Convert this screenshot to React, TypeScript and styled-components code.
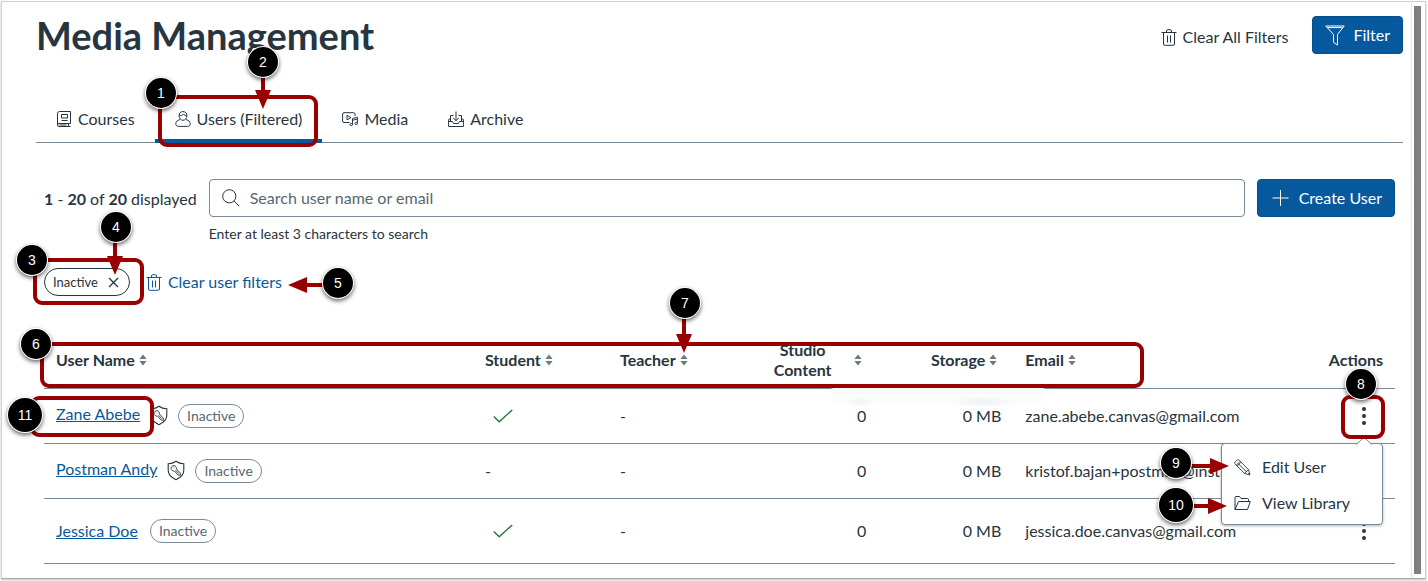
import React from "react";
import styled, { createGlobalStyle } from "styled-components";

const ink = "#273540";
const line = "#7b8a94";
const blue = "#07599e";
const red = "#990000";

const GlobalStyle = createGlobalStyle`
  *, *::before, *::after { box-sizing: border-box; }
  body {
    margin: 0;
    background: #fff;
    color: ${ink};
    font: 16px/20px Lato, "Liberation Sans", sans-serif;
  }
  button, input { font: inherit; color: inherit; margin: 0; }
  button { cursor: pointer; }
`;

/* ---------- page frame ---------- */

const Window = styled.div`
  position: relative;
  display: flex;
  margin: 1px 2px 2px 1px;
  border: 1px solid #d0d0d0;
  border-bottom-color: #a8a8a8;
  box-shadow: 0 1px 2px rgba(0, 0, 0, 0.25);
`;

const Page = styled.main`
  flex: 1;
  min-width: 0;
  padding: 14px 8px 14px 34px;
`;

const ScrollTrack = styled.div`
  display: flex;
  padding: 4px 4px 4px 2px;
  border-left: 1px solid #e4e4e4;
`;

const ScrollThumb = styled.div`
  width: 7px;
  background: #7e7e7e;
`;

/* ---------- header ---------- */

const Header = styled.header`
  display: flex;
  align-items: flex-start;
  justify-content: space-between;
`;

const Title = styled.h1`
  margin: 0;
  font-size: 38px;
  line-height: 38px;
  font-weight: 700;
`;

const HeaderActions = styled.div`
  display: flex;
  align-items: center;
  gap: 24px;
`;

const TextButton = styled.button<{ $link?: boolean }>`
  display: inline-flex;
  align-items: center;
  gap: 6px;
  padding: 0;
  border: 0;
  background: none;
  color: ${(p) => (p.$link ? blue : ink)};
`;

const ClearAllButton = styled(TextButton)`
  padding-top: 4px;
`;

const PrimaryButton = styled.button`
  display: inline-flex;
  align-items: center;
  flex: none;
  gap: 8px;
  height: 38px;
  padding: 0 12px;
  border: 1px solid #05508f;
  border-radius: 4px;
  background: ${blue};
  color: #fff;
`;

/* ---------- tabs ---------- */

const Tabs = styled.div`
  display: flex;
  margin-top: 43px;
  border-bottom: 1px solid ${line};
`;

const Tab = styled.button<{ $active?: boolean }>`
  display: flex;
  align-items: center;
  gap: 6px;
  height: 46px;
  padding: 1px 20px 0;
  border: 0;
  border-bottom: 4px solid ${(p) => (p.$active ? blue : "transparent")};
  margin-bottom: -1px;
  background: none;
`;

/* ---------- search ---------- */

const Panel = styled.section`
  padding: 36px 8px 0;
`;

const SearchRow = styled.div`
  display: flex;
  align-items: flex-start;
  gap: 12px;
`;

const Count = styled.div`
  flex: none;
  line-height: 40px;
`;

const SearchField = styled.div`
  flex: 1;
  min-width: 0;
`;

const SearchBox = styled.label`
  display: flex;
  align-items: center;
  gap: 10px;
  height: 38px;
  padding: 0 12px;
  border: 1px solid ${line};
  border-radius: 4px;
`;

const SearchInput = styled.input`
  flex: 1;
  min-width: 0;
  padding: 0;
  border: 0;
  outline: 0;
  background: none;
  &::placeholder { color: #576773; opacity: 1; }
`;

const Hint = styled.div`
  margin-top: 7px;
  font-size: 14px;
`;

const FilterRow = styled.div`
  display: flex;
  align-items: center;
  gap: 16px;
  margin-top: 24px;
`;

const FilterTag = styled.button`
  display: inline-flex;
  align-items: center;
  gap: 10px;
  height: 28px;
  padding: 0 10px 0 8px;
  border: 1px solid ${ink};
  border-radius: 14px;
  background: #fff;
  font-size: 13px;
`;

/* ---------- table ---------- */

const Table = styled.table`
  width: 100%;
  margin-top: 35px;
  border-collapse: collapse;
  table-layout: fixed;
`;

const NameCol = styled.col` width: 31.75%; `;
const StatCol = styled.col` width: 10%; `;
const ActionCol = styled.col` width: 8%; `;

type Align = "left" | "right" | "center";

const HeadCell = styled.th<{ $align?: Align }>`
  height: 57px;
  padding: 2px 12px 0;
  border-bottom: 1px solid ${line};
  text-align: ${(p) => p.$align ?? "left"};
  font-weight: 700;
`;

const SortButton = styled.button<{ $wide?: boolean }>`
  display: ${(p) => (p.$wide ? "flex" : "inline-flex")};
  width: ${(p) => (p.$wide ? "100%" : "auto")};
  align-items: center;
  padding: 0;
  border: 0;
  background: none;
  font-weight: 700;
  span { flex: 1; }
`;

const Row = styled.tr<{ $tall?: boolean }>`
  height: ${(p) => (p.$tall ? 65 : 55)}px;
`;

const Cell = styled.td<{ $align?: Align }>`
  padding: 0 12px;
  border-bottom: 1px solid ${line};
  text-align: ${(p) => p.$align ?? "left"};
  white-space: nowrap;
  vertical-align: middle;
`;

const NameLine = styled.div<{ $admin: boolean }>`
  display: flex;
  align-items: ${(p) => (p.$admin ? "flex-start" : "center")};
  gap: ${(p) => (p.$admin ? 10 : 12)}px;
`;

const NameLink = styled.a`
  color: ${blue};
  text-decoration: underline;
`;

const StatusPill = styled.span`
  height: 24px;
  padding: 0 8px;
  border: 1px solid ${line};
  border-radius: 12px;
  color: #576773;
  font-size: 14px;
  line-height: 22px;
`;

const CheckMark = styled.span`
  display: flex;
  padding-left: 8px;
`;

const MoreButton = styled.button`
  display: inline-flex;
  padding: 0;
  margin-right: 11px;
  border: 0;
  background: none;
  vertical-align: middle;
`;

/* ---------- popup menu ---------- */

const Menu = styled.div`
  position: absolute;
  z-index: 2;
  top: 441px;
  right: 42px;
  width: 162px;
  padding: 5px 0 3px;
  border: 1px solid ${line};
  border-radius: 4px;
  background: #fff;
  box-shadow: 0 1px 3px rgba(0, 0, 0, 0.3);
`;

const MenuPointer = styled.svg`
  position: absolute;
  top: -7px;
  right: 10px;
`;

const MenuItem = styled.button`
  display: flex;
  align-items: center;
  gap: 11px;
  width: 100%;
  height: 36px;
  padding: 0 12px;
  border: 0;
  background: none;
`;

/* ---------- callouts ---------- */

const Callouts = styled.div`
  position: absolute;
  z-index: 3;
  inset: 0;
  pointer-events: none;
`;

type Spot = { $top: number; $left?: string; $right?: string };

const place = (p: Spot) => `
  position: absolute;
  top: ${p.$top}px;
  ${p.$left ? `left: ${p.$left};` : ""}
  ${p.$right ? `right: ${p.$right};` : ""}
`;

const Outline = styled.div<Spot & { $width?: number; $height: number }>`
  ${place}
  ${(p) => (p.$width ? `width: ${p.$width}px;` : "")}
  height: ${(p) => p.$height}px;
  border: 4px solid ${red};
  border-radius: 9px;
`;

const Badge = styled.div<Spot & { $large?: boolean }>`
  ${place}
  width: ${(p) => (p.$large ? 34 : 30)}px;
  height: ${(p) => (p.$large ? 34 : 30)}px;
  border-radius: 50%;
  background: #000;
  box-shadow: 0 0 0 1px #fff, 0 2px 4px 1px rgba(0, 0, 0, 0.6);
  color: #fff;
  font: 14px/30px "Liberation Sans", sans-serif;
  line-height: ${(p) => (p.$large ? 34 : 30)}px;
  text-align: center;
`;

const ArrowSvg = styled.svg<Spot>`
  ${place}
`;

const StickyShade = styled.div<Spot>`
  ${place}
  width: 212px;
  height: 20px;
  background:
    radial-gradient(ellipse 16px 5px at 28px 16px, #f1f2f3, transparent),
    radial-gradient(ellipse 34px 6px at 150px 16px, #eff0f2, transparent),
    linear-gradient(#f9fafa, #fefefe);
  filter: blur(1px);
`;

const DownArrow = (p: Spot & { height: number }) => (
  <ArrowSvg $top={p.$top} $left={p.$left} width="16" height={p.height} aria-hidden>
    <path d={`M6 0h4v${p.height - 18}H6z`} fill={red} />
    <path d={`M0 ${p.height - 19}h16l-8 19z`} fill={red} />
  </ArrowSvg>
);

const SideArrow = (p: Spot & { width: number; flip?: boolean }) => (
  <ArrowSvg $top={p.$top} $left={p.$left} $right={p.$right} width={p.width} height="16" aria-hidden>
    <g transform={p.flip ? `translate(${p.width} 0) scale(-1 1)` : undefined}>
      <path d={`M0 6h${p.width - 18}v4H0z`} fill={red} />
      <path d={`M${p.width - 19} 0v16l19-8z`} fill={red} />
    </g>
  </ArrowSvg>
);

/* ---------- icons ---------- */

const IconSvg = styled.svg`
  flex: none;
`;

const Icon = (p: { w?: number; h?: number; box?: string; sw?: number; children: React.ReactNode }) => (
  <IconSvg
    width={p.w ?? 16}
    height={p.h ?? 16}
    viewBox={p.box ?? "0 0 16 16"}
    fill="none"
    stroke="currentColor"
    strokeWidth={p.sw ?? 1}
    aria-hidden
  >
    {p.children}
  </IconSvg>
);

const TrashIcon = () => (
  <Icon h={17} box="0 0 16 17">
    <path d="M0.5 3.5h15M5.5 3.5v-1.500a1.300 1.300 0 0 1 1.300-1.300h2.400a1.300 1.300 0 0 1 1.300 1.300v1.500M2.500 3.500v11.500a1.300 1.300 0 0 0 1.300 1.300h8.400a1.300 1.300 0 0 0 1.300-1.300V3.500M6.500 6.500v7M9.500 6.500v7" />
  </Icon>
);

const FunnelIcon = () => (
  <Icon w={20} h={21} box="0 0 20 21">
    <path d="M0.800 1h18.400l-6.700 8.500v10.500l-4-2.700V9.500zM2.500 2.600h15" />
  </Icon>
);

const BookIcon = () => (
  <Icon>
    <path d="M14.500 12.500H3a1.500 1.500 0 0 0 0 3h11.500M14.500 12.500V0.500H3.500a2 2 0 0 0-2 2V14M5.500 3.500h6v3.500H5.500zM5.500 9.500h6M12.500 12.500v3M3.500 14h7" />
  </Icon>
);

const UserIcon = () => (
  <Icon>
    <path d="M8 0.600c2.500 0 3.900 1.600 3.900 4.100 0 2.300-1.500 4.600-3.900 4.600S4.100 7 4.100 4.700C4.100 2.200 5.500 0.600 8 0.600zM4.200 4.600c2 0.200 3.500-0.400 4.300-1.600 0.700 1 1.800 1.600 3.300 1.600M5 8.600C2.300 9.300 0.800 10.600 0.800 12.800c0 1.500 0.900 2.600 2.600 2.600h9.200c1.700 0 2.600-1.100 2.600-2.600 0-2.200-1.500-3.500-4.200-4.200" />
  </Icon>
);

const MediaIcon = () => (
  <Icon>
    <path d="M7.500 11.500H2a1.400 1.400 0 0 1-1.400-1.400V3.100A1.400 1.400 0 0 1 2 1.700h9.600A1.400 1.400 0 0 1 13 3.100V5M5 4.300v4.500l4-2.200zM10.500 13.300V7.500l4.900-1.300v6M10.500 9.300l4.900-1.300" />
    <ellipse cx="9.300" cy="13.500" rx="1.300" ry="1.100" />
    <ellipse cx="14.200" cy="12.500" rx="1.300" ry="1.100" />
  </Icon>
);

const ArchiveIcon = () => (
  <Icon>
    <path d="M8 0.500v9M5 6.700l3 3 3-3M5.500 4.500H2.500v6M10.500 4.500h3v6M0.600 8.500v7h14.800v-7M0.600 10.500h3.700l1.400 2h4.600l1.400-2h3.700M0.600 8.500l1.900-1M15.400 8.500l-1.900-1" />
  </Icon>
);

const SearchIcon = () => (
  <Icon w={18} h={18} box="0 0 18 18">
    <circle cx="7.300" cy="7.300" r="6.600" />
    <path d="M12 12l5.300 5.300" />
  </Icon>
);

const PlusIcon = () => (
  <Icon w={21} h={18} box="-2 0 21 18">
    <path d="M8.500 1v16M0.500 9h16" />
  </Icon>
);

const CloseIcon = () => (
  <Icon w={11} h={11} box="0 0 11 11" sw={1.3}>
    <path d="M1 1l9 9M10 1l-9 9" />
  </Icon>
);

const SortIcon = () => (
  <Icon w={16} h={12} box="0 0 16 12">
    <path d="M8 0.500l3.600 4.500H4.400zM8 11.500l3.600-4.500H4.400z" fill="#6a7883" stroke="none" />
  </Icon>
);

const ShieldKeyIcon = () => (
  <Icon w={18} h={22} box="0 -1.500 18 22" sw={1.1}>
    <path d="M9 0.800c2 1.500 4.800 2.400 7.800 2.500v6.500c0 4.400-3.500 7.500-7.800 9.400-4.300-1.900-7.800-5-7.800-9.400V3.300C4.200 3.200 7 2.300 9 0.800z" />
    <path d="M9.400 8.500a2.700 2.700 0 1 0-2 2l3.700 4 2.300 0.300-0.200-2.400zM6 7l0.800 0.800M8.600 9.800l3.200 3.300" strokeWidth="0.900" />
  </Icon>
);

const CheckIcon = () => (
  <Icon w={20} h={14} box="0 0 20 14" sw={1.4}>
    <path d="M0.800 7.500l5.400 5.200L19.200 0.900" stroke="#1c7a3e" />
  </Icon>
);

const MoreIcon = () => (
  <Icon w={16} h={20} box="0 0 16 20">
    <g fill={ink} stroke="none">
      <circle cx="8" cy="3" r="2" />
      <circle cx="8" cy="10" r="2" />
      <circle cx="8" cy="17" r="2" />
    </g>
  </Icon>
);

const PencilIcon = () => (
  <Icon w={17} h={17} box="0 0 17 17">
    <path d="M1 3.200L3.200 1c0.500-0.500 1.200-0.500 1.700 0l9.600 9.600 1.500 5.400-5.400-1.500L1 4.900c-0.500-0.500-0.500-1.200 0-1.700zM2.300 6.200l3.900-3.900M4.200 4.600l8.500 8.500M10.600 14.500l3.900-3.900M3.200 7.100l3.900-3.900M13.800 15.400l1.600-1.600" strokeWidth="0.900" />
  </Icon>
);

const FolderIcon = () => (
  <Icon w={17} h={16} box="0 0 17 16">
    <path d="M1 14.500V2.500a1 1 0 0 1 1-1h3.500l1.500 2h6.500a1 1 0 0 1 1 1v2M1 14.500h12.500l2.800-8H4.500z" />
  </Icon>
);

/* ---------- data ---------- */

const tabs = [
  { label: "Courses", icon: <BookIcon /> },
  { label: "Users (Filtered)", icon: <UserIcon />, active: true },
  { label: "Media", icon: <MediaIcon /> },
  { label: "Archive", icon: <ArchiveIcon /> },
];

const columns: { label: string; align?: Align; wide?: boolean }[] = [
  { label: "User Name" },
  { label: "Student" },
  { label: "Teacher" },
  { label: "Studio Content", align: "center", wide: true },
  { label: "Storage", align: "right" },
  { label: "Email" },
];

const users = [
  { name: "Zane Abebe", admin: true, student: true, email: "zane.abebe.canvas@gmail.com" },
  { name: "Postman Andy", admin: true, student: false, email: "kristof.bajan+postman@instructure.com" },
  { name: "Jessica Doe", admin: false, student: true, email: "jessica.doe.canvas@gmail.com" },
];

export default function App() {
  return (
    <>
      <GlobalStyle />
      <Window>
        <Page>
          <Header>
            <Title>Media Management</Title>
            <HeaderActions>
              <ClearAllButton><TrashIcon />Clear All Filters</ClearAllButton>
              <PrimaryButton><FunnelIcon />Filter</PrimaryButton>
            </HeaderActions>
          </Header>

          <Tabs role="tablist">
            {tabs.map((t) => (
              <Tab key={t.label} role="tab" aria-selected={!!t.active} $active={t.active}>
                {t.icon}
                {t.label}
              </Tab>
            ))}
          </Tabs>

          <Panel>
            <SearchRow>
              <Count><b>1</b> - <b>20</b> of <b>20</b> displayed</Count>
              <SearchField>
                <SearchBox>
                  <SearchIcon />
                  <SearchInput type="text" placeholder="Search user name or email" aria-label="Search user name or email" />
                </SearchBox>
                <Hint>Enter at least 3 characters to search</Hint>
              </SearchField>
              <PrimaryButton><PlusIcon />Create User</PrimaryButton>
            </SearchRow>

            <FilterRow>
              <FilterTag>Inactive<CloseIcon /></FilterTag>
              <TextButton $link><TrashIcon />Clear user filters</TextButton>
            </FilterRow>

            <Table>
              <colgroup>
                <NameCol />
                <StatCol />
                <StatCol />
                <StatCol />
                <StatCol />
                <col />
                <ActionCol />
              </colgroup>
              <thead>
                <tr>
                  {columns.map((c) => (
                    <HeadCell key={c.label} $align={c.align}>
                      <SortButton $wide={c.wide}><span>{c.label}</span><SortIcon /></SortButton>
                    </HeadCell>
                  ))}
                  <HeadCell $align="right">Actions</HeadCell>
                </tr>
              </thead>
              <tbody>
                {users.map((u) => (
                  <Row key={u.name} $tall={!u.admin}>
                    <Cell>
                      <NameLine $admin={u.admin}>
                        <NameLink href="#">{u.name}</NameLink>
                        {u.admin && <ShieldKeyIcon />}
                        <StatusPill>Inactive</StatusPill>
                      </NameLine>
                    </Cell>
                    <Cell>{u.student ? <CheckMark><CheckIcon /></CheckMark> : "-"}</Cell>
                    <Cell>-</Cell>
                    <Cell $align="right">0</Cell>
                    <Cell $align="right">0 MB</Cell>
                    <Cell>{u.email}</Cell>
                    <Cell $align="right">
                      <MoreButton aria-label={`Actions for ${u.name}`}><MoreIcon /></MoreButton>
                    </Cell>
                  </Row>
                ))}
              </tbody>
            </Table>
          </Panel>
        </Page>

        <ScrollTrack><ScrollThumb /></ScrollTrack>

        <Menu>
          <MenuPointer width="16" height="8" aria-hidden>
            <path d="M0 7.500L8 0.500l8 7" fill="#fff" stroke={line} />
          </MenuPointer>
          <MenuItem><PencilIcon />Edit User</MenuItem>
          <MenuItem><FolderIcon />View Library</MenuItem>
        </Menu>

        <Callouts>
          <StickyShade $top={384} $left="830px" />
          <Outline $top={93} $left="156px" $width={160} $height={52} />
          <Outline $top={256} $left="31px" $width={111} $height={47} />
          <Outline $top={340} $left="38px" $right="281px" $height={46} />
          <Outline $top={394} $left="28px" $width={124} $height={41} />
          <Outline $top={393} $right="40px" $width={44} $height={44} />

          <DownArrow $top={74} $left="253px" height={33} />
          <DownArrow $top={239} $left="105px" height={34} />
          <DownArrow $top={316} $left="674px" height={35} />
          <SideArrow $top={275} $left="286px" width={38} flip />
          <SideArrow $top={456} $right="196px" width={42} />
          <SideArrow $top={496} $right="198px" width={40} />

          <Badge $top={76} $left="144px">1</Badge>
          <Badge $top={45} $left="246px">2</Badge>
          <Badge $top={243} $left="15px">3</Badge>
          <Badge $top={210} $left="99px">4</Badge>
          <Badge $top={266} $left="321px">5</Badge>
          <Badge $top={327} $left="19px">6</Badge>
          <Badge $top={286} $left="668px">7</Badge>
          <Badge $top={367} $right="49px">8</Badge>
          <Badge $top={446} $right="234px">9</Badge>
          <Badge $top={486} $right="232px" $large>10</Badge>
          <Badge $top={396} $left="6px" $large>11</Badge>
        </Callouts>
      </Window>
    </>
  );
}
